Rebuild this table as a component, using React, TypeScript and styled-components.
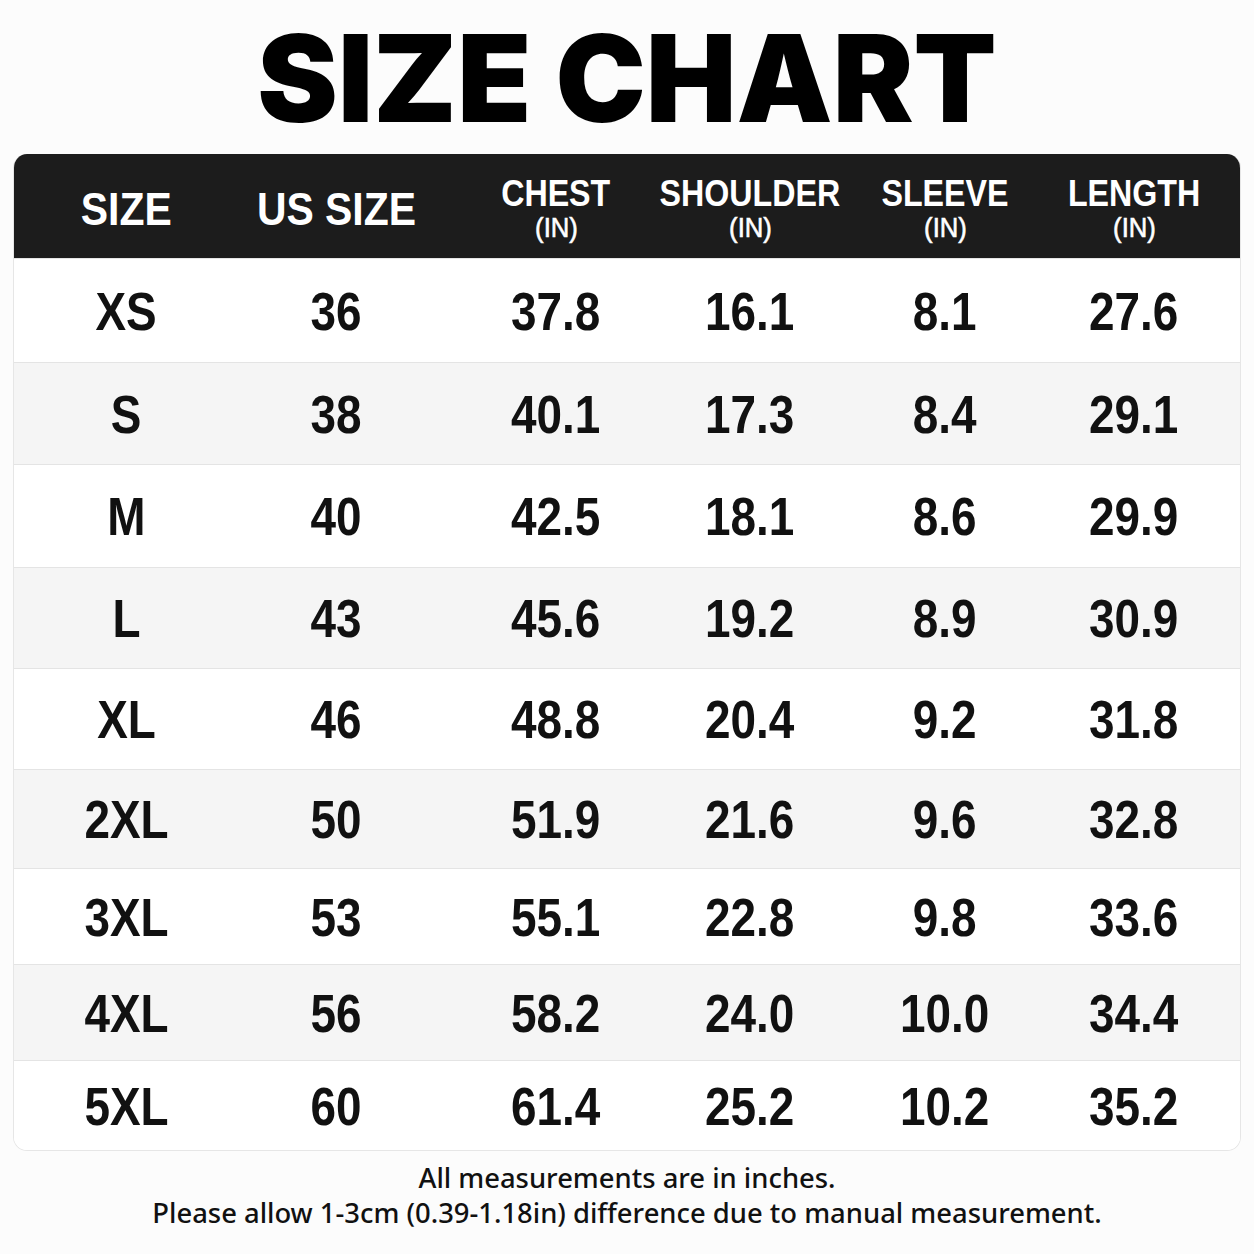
import React from "react";
import styled, { createGlobalStyle } from "styled-components";

const GlobalStyle = createGlobalStyle`
  html, body { margin: 0; padding: 0; background: #fcfcfc; }
  body { font-family: "Liberation Sans", Arial, sans-serif; }
`;

const Page = styled.div`
  width: 1254px;
  height: 1254px;
  box-sizing: border-box;
  padding: 20px 13px 0 13px;
  display: flex;
  flex-direction: column;
  align-items: stretch;
`;

const Title = styled.h1`
  margin: 0;
  height: 134px;
  font-family: Inter, "Liberation Sans", sans-serif;
  font-weight: 900;
  font-size: 121px;
  line-height: 116px;
  letter-spacing: 0px;
  color: #000;
  text-align: center;
`;

const Table = styled.div`
  border-radius: 14px;
  overflow: hidden;
  border: 1px solid #e6e6e6;
  border-top: none;
  background: #fff;
`;

const Grid = styled.div`
  display: grid;
  grid-template-columns: 217px 215px 208px 194px 192px 1fr;
  align-items: center;
  box-sizing: border-box;
`;

const Header = styled(Grid)`
  background: #1c1c1c;
  height: 104px;
  color: #fff;
`;

const HeadCell = styled.div<{ $nudge?: number }>`
  display: flex;
  flex-direction: column;
  align-items: center;
  justify-content: center;
  font-weight: 700;
  white-space: nowrap;
  transform: translateX(${(p) => p.$nudge ?? 0}px);
`;

const Narrow = styled.span<{ $sx: number }>`
  display: inline-block;
  transform: scaleX(${(p) => p.$sx});
  transform-origin: center;
`;

const HeadMain = styled(Narrow)<{ $big?: boolean }>`
  font-size: ${(p) => (p.$big ? 47 : 37)}px;
  line-height: ${(p) => (p.$big ? 48 : 36)}px;
  margin-top: ${(p) => (p.$big ? 6 : 8)}px;
`;

const HeadSub = styled(Narrow)`
  font-size: 27px;
  line-height: 32px;
  font-weight: 400;
  -webkit-text-stroke: 0.6px #fff;
`;

const Row = styled(Grid)<{ $alt: boolean; $h: number }>`
  height: ${(p) => p.$h}px;
  background: ${(p) => (p.$alt ? "#f5f5f5" : "#ffffff")};
  border-top: 1px solid #e4e4e4;
  &:first-child { border-top: none; }
`;

const Cell = styled.div<{ $nudge?: number }>`
  text-align: center;
  font-size: 54px;
  font-weight: 700;
  color: #111;
  line-height: 1;
  transform: translateX(${(p) => p.$nudge ?? 0}px);
`;

const Footer = styled.div`
  margin-top: 9px;
  text-align: center;
  font-family: "Noto Sans", "Open Sans", sans-serif;
  font-weight: 500;
  font-size: 27.4px;
  line-height: 35px;
  color: #111;
`;

const nudges = [4, -2, 6, -1, 1, -6];

const headers: { main: string; sub?: string }[] = [
  { main: "SIZE" },
  { main: "US SIZE" },
  { main: "CHEST", sub: "(IN)" },
  { main: "SHOULDER", sub: "(IN)" },
  { main: "SLEEVE", sub: "(IN)" },
  { main: "LENGTH", sub: "(IN)" },
];

const rows: string[][] = [
  ["XS", "36", "37.8", "16.1", "8.1", "27.6"],
  ["S", "38", "40.1", "17.3", "8.4", "29.1"],
  ["M", "40", "42.5", "18.1", "8.6", "29.9"],
  ["L", "43", "45.6", "19.2", "8.9", "30.9"],
  ["XL", "46", "48.8", "20.4", "9.2", "31.8"],
  ["2XL", "50", "51.9", "21.6", "9.6", "32.8"],
  ["3XL", "53", "55.1", "22.8", "9.8", "33.6"],
  ["4XL", "56", "58.2", "24.0", "10.0", "34.4"],
  ["5XL", "60", "61.4", "25.2", "10.2", "35.2"],
];

const heights = [104, 102, 103, 101, 101, 99, 96, 96, 90];

export default function App() {
  return (
    <>
      <GlobalStyle />
      <Page>
        <Title>SIZE CHART</Title>
        <Table>
          <Header>
            {headers.map((h, i) => (
              <HeadCell key={h.main} $nudge={nudges[i]}>
                <HeadMain $big={!h.sub} $sx={0.87}>
                  {h.main}
                </HeadMain>
                {h.sub && <HeadSub $sx={0.95}>{h.sub}</HeadSub>}
              </HeadCell>
            ))}
          </Header>
          {rows.map((r, ri) => (
            <Row key={r[0]} $alt={ri % 2 === 1} $h={heights[ri]}>
              {r.map((v, ci) => (
                <Cell key={ci} $nudge={nudges[ci]}>
                  <Narrow $sx={0.85}>{v}</Narrow>
                </Cell>
              ))}
            </Row>
          ))}
        </Table>
        <Footer>
          All measurements are in inches.
          <br />
          Please allow 1-3cm (0.39-1.18in) difference due to manual measurement.
        </Footer>
      </Page>
    </>
  );
}
